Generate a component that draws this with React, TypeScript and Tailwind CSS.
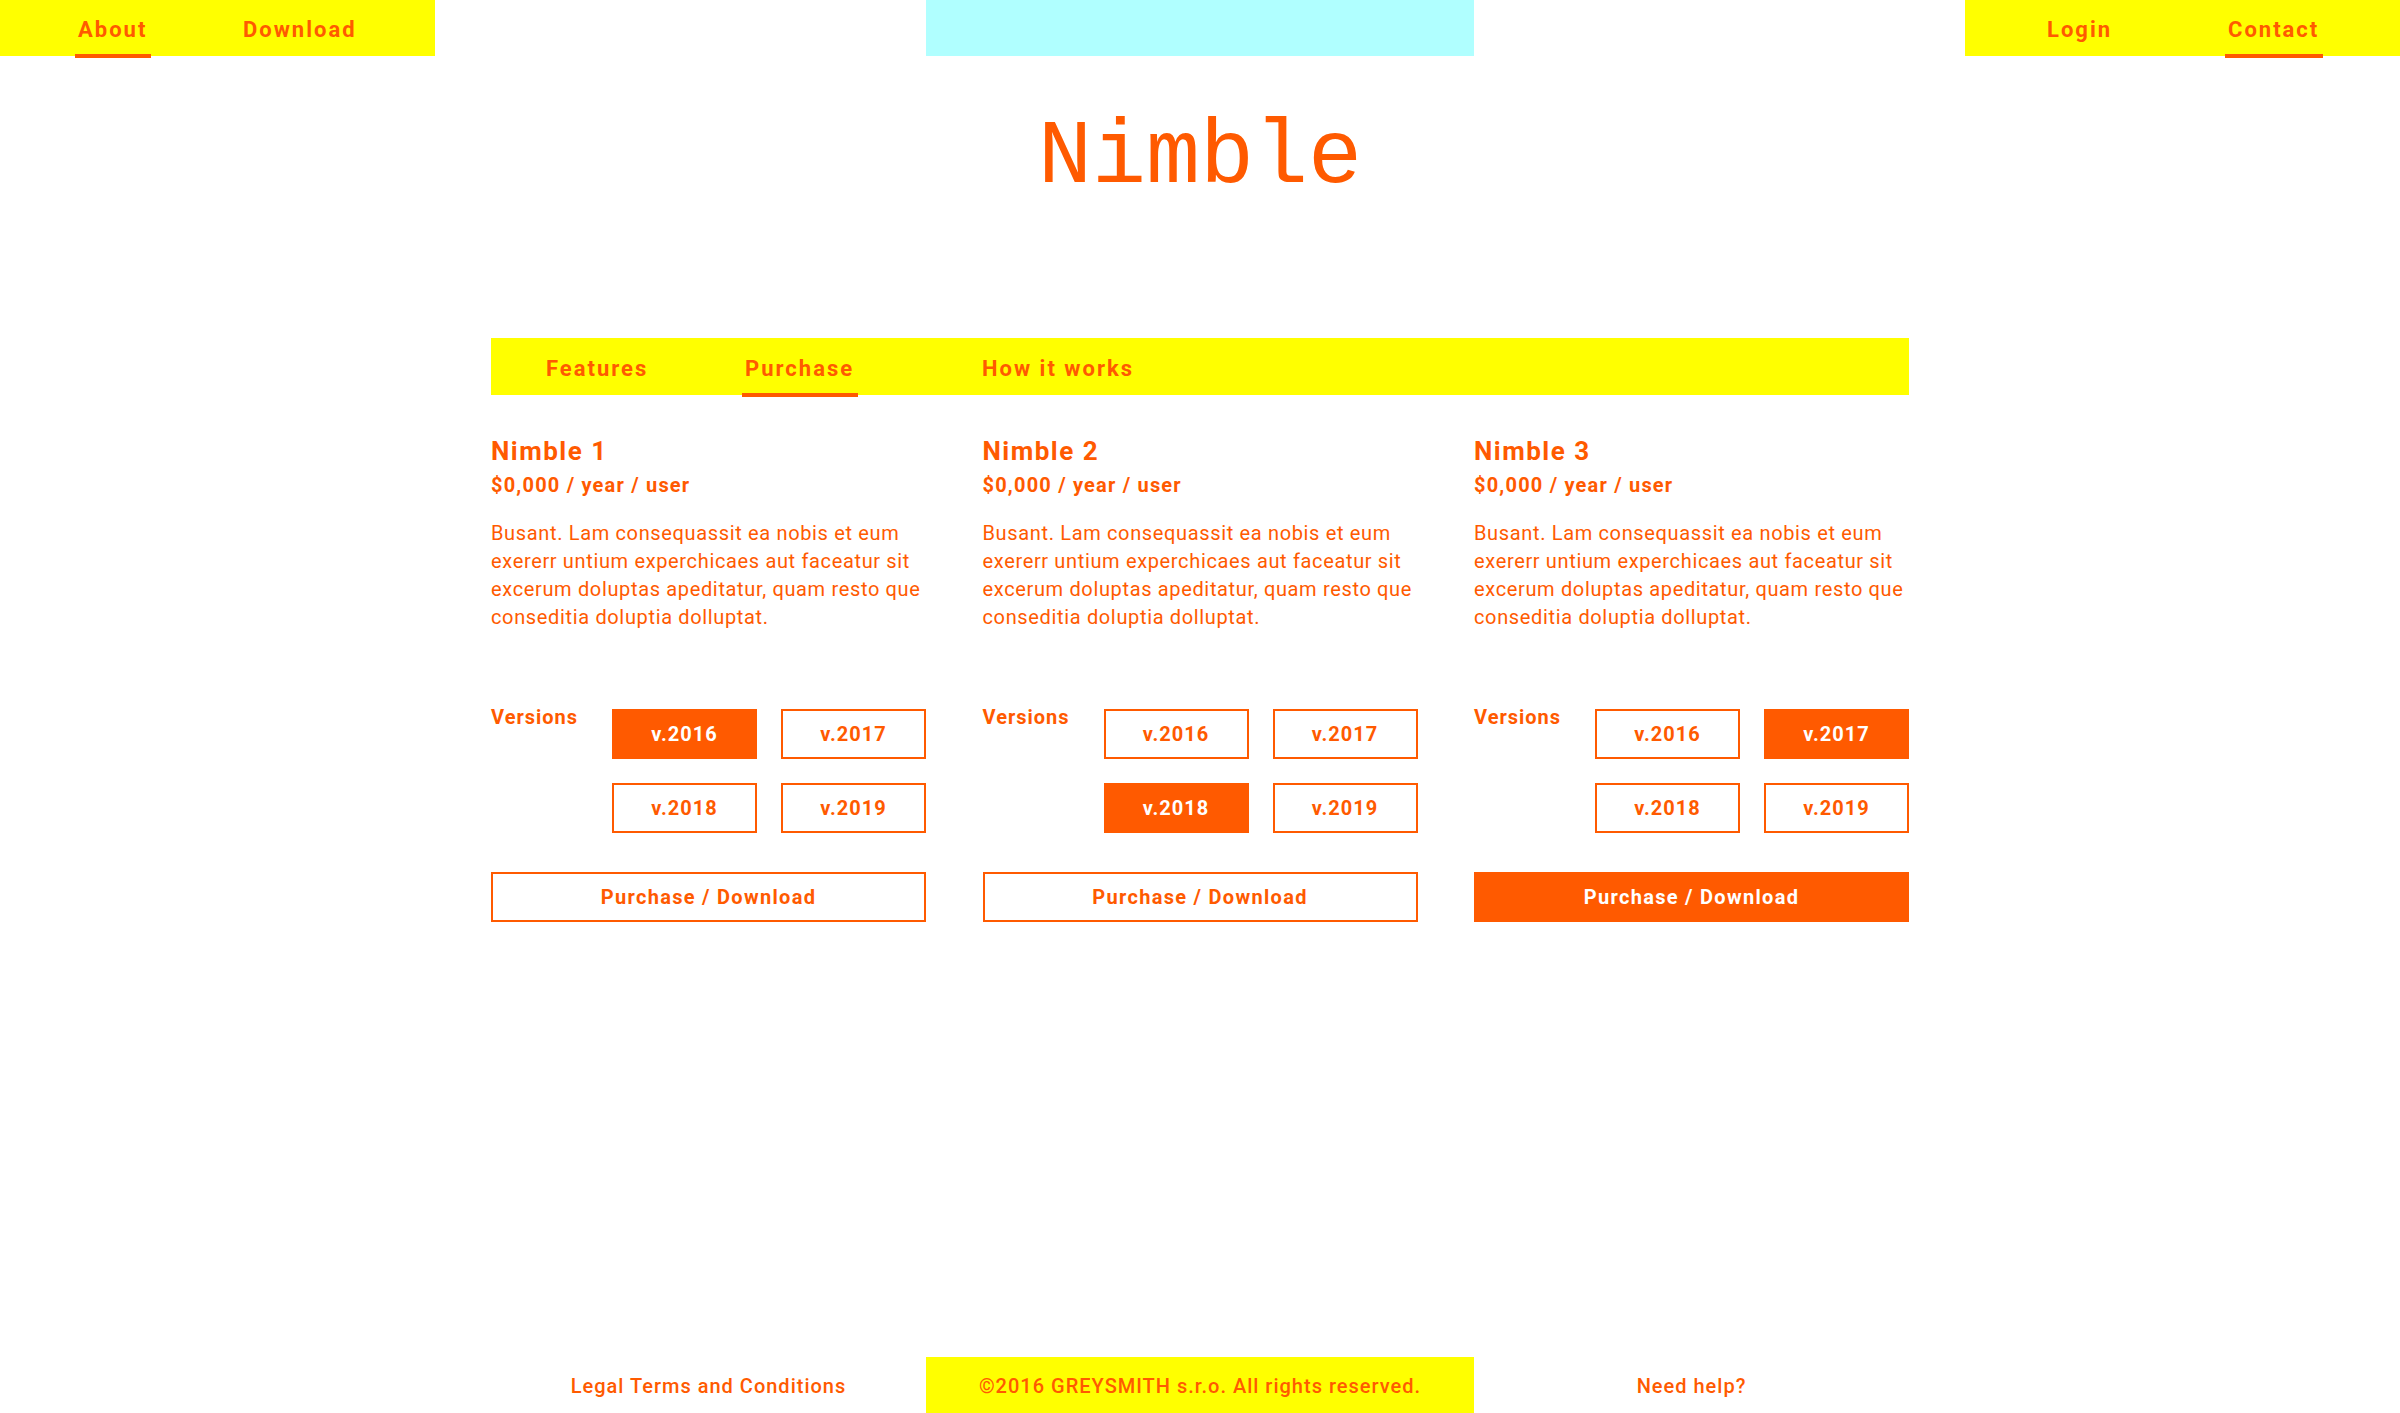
import React from "react";

const ORANGE = "text-[#ff5a00]";

const plans = [
  { name: "Nimble 1", selected: "v.2016", primary: false },
  { name: "Nimble 2", selected: "v.2018", primary: false },
  { name: "Nimble 3", selected: "v.2017", primary: true },
];

const versions = ["v.2016", "v.2017", "v.2018", "v.2019"];

function NavItem({ label, active, width }: { label: string; active?: boolean; width?: string }) {
  return (
    <div className={`flex ${width ?? ""}`}>
      <span className="relative text-[22px] font-bold tracking-[2px] leading-[56px]">
        {label}
        {active && <span className="absolute left-[-3px] right-[-4px] bottom-[-2px] h-[4px] bg-[#ff5a00]" />}
      </span>
    </div>
  );
}

function VersionButton({ label, active }: { label: string; active: boolean }) {
  return (
    <button
      className={`h-[50px] w-[145px] border-2 border-[#ff5a00] text-[20px] font-bold tracking-[1px] ${
        active ? "bg-[#ff5a00] text-white" : "bg-white text-[#ff5a00]"
      }`}
    >
      {label}
    </button>
  );
}

export default function App() {
  return (
    <div
      className={`flex h-screen flex-col bg-white ${ORANGE}`}
      style={{ fontFamily: "Roboto, 'Liberation Sans', sans-serif" }}
    >
      {/* Top bar */}
      <header className="flex h-[56px]">
        <nav className="flex w-[435px] bg-[#ffff00] pl-[78px] pt-[2px]">
          <NavItem label="About" active width="w-[165px]" />
          <NavItem label="Download" />
        </nav>
        <div className="flex-1" />
        <div className="w-[548px] bg-[#b0ffff]" />
        <div className="flex-1" />
        <nav className="flex w-[435px] bg-[#ffff00] pl-[82px] pt-[2px]">
          <NavItem label="Login" width="w-[181px]" />
          <NavItem label="Contact" active />
        </nav>
      </header>

      {/* Logo */}
      <div className="mt-[57px] flex justify-center">
        <h1
          className="h-[90px] text-[90px] leading-[90px]"
          style={{ fontFamily: "'Liberation Mono', monospace" }}
        >
          Nimble
        </h1>
      </div>

      <main className="mx-auto mt-[135px] w-[1418px]">
        {/* Tabs */}
        <div className="flex h-[57px] bg-[#ffff00] pl-[55px] pt-[3px]">
          <NavItem label="Features" width="w-[199px]" />
          <NavItem label="Purchase" active width="w-[237px]" />
          <NavItem label="How it works" />
        </div>

        {/* Plans */}
        <div className="mt-[41px] grid grid-cols-[repeat(3,435px)] gap-x-[56.5px]">
          {plans.map((plan) => (
            <section key={plan.name} className="flex flex-col">
              <h2 className="text-[26px] font-bold leading-[30px] tracking-[1.5px]">{plan.name}</h2>
              <p className="mt-[7px] text-[20px] font-bold leading-[24px] tracking-[1.2px]">$0,000 / year / user</p>
              <p className="mt-[22px] text-[20px] leading-[28px] tracking-[0.65px] whitespace-nowrap">
                Busant. Lam consequassit ea nobis et eum
                <br />
                exererr untium experchicaes aut faceatur sit
                <br />
                excerum doluptas apeditatur, quam resto que
                <br />
                conseditia doluptia dolluptat.
              </p>

              <div className="mt-[78px] flex items-start justify-between">
                <span className="-mt-[4px] text-[20px] font-bold leading-[24px] tracking-[1px]">Versions</span>
                <div className="grid grid-cols-[145px_145px] gap-[24px]">
                  {versions.map((v) => (
                    <VersionButton key={v} label={v} active={v === plan.selected} />
                  ))}
                </div>
              </div>

              <button
                className={`mt-[39px] h-[50px] w-full border-2 border-[#ff5a00] text-[20px] font-bold tracking-[1.3px] ${
                  plan.primary ? "bg-[#ff5a00] text-white" : "bg-white text-[#ff5a00]"
                }`}
              >
                Purchase / Download
              </button>
            </section>
          ))}
        </div>
      </main>

      {/* Footer */}
      <footer className="mt-auto flex h-[56px] justify-center text-[20px] font-medium tracking-[1px]">
        <div className="flex w-[435px] items-center justify-center pt-[2px]">Legal Terms and Conditions</div>
        <div className="flex w-[548px] items-center justify-center bg-[#ffff00] pt-[2px]">
          ©2016 GREYSMITH s.r.o. All rights reserved.
        </div>
        <div className="flex w-[435px] items-center justify-center pt-[2px]">Need help?</div>
      </footer>
    </div>
  );
}
